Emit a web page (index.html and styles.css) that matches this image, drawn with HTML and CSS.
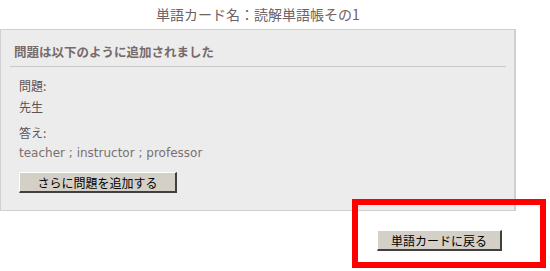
FILE: index.html
```html
<!doctype html>
<html>
<head>
  <meta charset="utf-8">
  <link rel="stylesheet" href="styles.css">
</head>
<body>
  <div class="page">
    <h1 class="title">単語カード名：読解単語帳その1</h1>

    <div class="panel">
      <h2 class="panel-head">問題は以下のように追加されました</h2>
      <div class="panel-body">
        <dl class="fields">
          <dt>問題:</dt>
          <dd>先生</dd>
          <dt>答え:</dt>
          <dd class="latin">teacher ; instructor ; professor</dd>
        </dl>
        <button class="btn btn-add">さらに問題を追加する</button>
      </div>
    </div>

    <div class="back-row">
      <button class="btn btn-back">単語カードに戻る</button>
    </div>

    <div class="mark"></div>
  </div>
</body>
</html>
```

FILE: styles.css
```css
body{
  margin: 0;
  background: #fff;
  font-family: "Noto Sans CJK JP", "DejaVu Sans", sans-serif;
  color: #5a5050;
}
.page{
  position: relative;
  width: 516px;
  min-height: 271px;
}
.title{
  margin: 0;
  height: 29px;
  line-height: 28px;
  text-align: center;
  font-size: 14px;
  font-weight: normal;
  color: #6e6262;
}
.panel{
  background: #ececec;
  border: 1px solid #d0d0d0;
  border-right-width: 2px;
}
.panel-head{
  margin: 0 8px 0 9px;
  padding: 12px 4px 0;
  height: 24px;
  line-height: 20px;
  font-size: 12.5px;
  font-weight: bold;
  color: #776a6a;
  border-bottom: 1px solid #c8c8c8;
}
.panel-body{
  padding: 8px 18px 17px;
}
.fields{
  margin: 0;
  font-size: 12px;
  line-height: 21px;
  color: #5c5252;
}
.fields dt{
  margin: 0;
}
.fields dd{
  margin: 0 0 5px;
}
.fields .latin{
  font-family: "DejaVu Sans", sans-serif;
  font-size: 12px;
  color: #7a7070;
  margin-bottom: 8px;
}
.btn{
  display: block;
  height: 21px;
  padding: 0;
  background: #d4d0c8;
  color: #000;
  font-family: "Noto Sans CJK JP", sans-serif;
  font-size: 12px;
  line-height: 17px;
  border-style: solid;
  border-width: 1px 2px 2px 1px;
  border-color: #ffffff #404040 #404040 #ffffff;
}
.btn-add{
  width: 158px;
}
.back-row{
  display: flex;
  justify-content: flex-end;
  padding: 19px 14px 0 0;
}
.btn-back{
  width: 125px;
}
.mark{
  position: absolute;
  left: 352px;
  top: 199px;
  width: 182px;
  height: 57px;
  border: 6px solid #ff0000;
}
```
